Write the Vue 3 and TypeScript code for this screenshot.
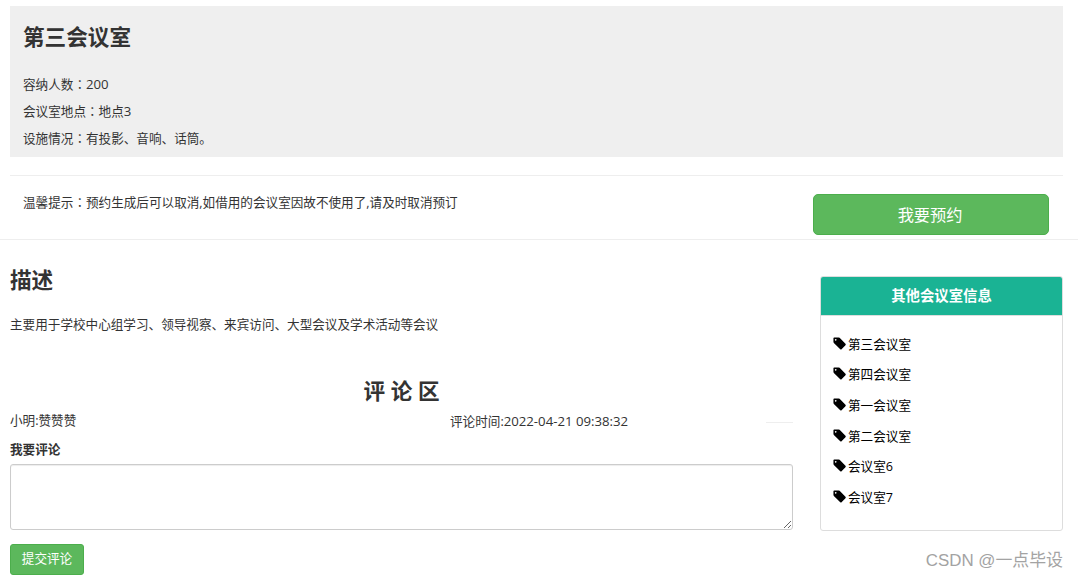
<script setup lang="ts">
const rooms: string[] = ['第三会议室', '第四会议室', '第一会议室', '第二会议室', '会议室6', '会议室7']
</script>

<template>
  <div class="page">
    <section class="hero">
      <h1>第三会议室</h1>
      <p>容纳人数<span class="colon">：</span><span class="num">200</span></p>
      <p>会议室地点<span class="colon">：</span>地点<span class="num">3</span></p>
      <p>设施情况<span class="colon">：</span>有投影、音响、话筒。</p>
    </section>
    <div class="notice-wrap">
      <div class="notice">
        <p>温馨提示<span class="colon">：</span>预约生成后可以取消,如借用的会议室因故不使用了,请及时取消预订</p>
        <button class="reserve" type="button">我要预约</button>
      </div>
    </div>
    <div class="main">
      <div class="left">
        <h2>描述</h2>
        <p class="desc">主要用于学校中心组学习、领导视察、来宾访问、大型会议及学术活动等会议</p>
        <h3>评 论 区</h3>
        <div class="comment">
          <span class="who">小明:赞赞赞</span>
          <span class="when">评论时间:<span class="num">2022-04-21 09:38:32</span></span>
          <i class="rule"></i>
        </div>
        <label class="lbl" for="cm">我要评论</label>
        <textarea id="cm" class="ta"></textarea>
        <button class="submit" type="button">提交评论</button>
      </div>
      <aside class="panel">
        <div class="panel-head">其他会议室信息</div>
        <ul>
          <li v-for="r in rooms" :key="r">
            <svg class="tag" viewBox="0 0 12 12" width="13" height="13" aria-hidden="true">
              <path fill-rule="evenodd" d="M0.4 1.2 Q0.4 0.4 1.2 0.4 L5.2 0.4 Q5.7 0.4 6.1 0.8 L11.5 6.3 Q12.1 6.9 11.5 7.5 L7.9 11.2 Q7.3 11.8 6.7 11.2 L1 5.7 Q0.4 5.2 0.4 4.7 Z M2.5 1.9 a0.7 0.7 0 1 0 0.01 0 Z" fill="#000"/>
            </svg>
            <span>{{ r }}</span>
          </li>
        </ul>
      </aside>
    </div>
    <div class="mark">CSDN @一点毕设</div>
  </div>
</template>

<style scoped>
.page {
  position: relative;
  width: 1078px;
  height: 578px;
  overflow: hidden;
  background: #fff;
  color: #333;
  font-family: "Open Sans", "Noto Sans CJK SC", sans-serif;
  font-size: 12.6px;
}
p { margin: 0; }
.colon { font-family: "Noto Sans CJK TC", sans-serif; }
.num { font-size: 13.2px; }
.hero {
  margin: 6px 15px 0 10px;
  height: 151px;
  box-sizing: border-box;
  padding: 16px 13px 0;
  background: #efefef;
}
h1 {
  margin: 0 0 23px;
  font-size: 21.6px;
  line-height: 30px;
  font-weight: 700;
}
.hero p { height: 18px; line-height: 18px; margin-bottom: 9px; }
.notice-wrap {
  margin-top: 18px;
  height: 64px;
  border-bottom: 1px solid #eee;
}
.notice {
  margin: 0 15px 0 10px;
  height: 64px;
  box-sizing: border-box;
  border-top: 1px solid #eee;
  display: flex;
  justify-content: space-between;
  padding: 0 14px 0 13px;
}
.notice p { margin-top: 17px; line-height: 18px; }
.reserve {
  width: 236px;
  height: 41px;
  margin-top: 18px;
  padding: 0 2px 2px 0;
  border: 1px solid #4cae4c;
  border-radius: 5px;
  background: #5cb85c;
  color: #fff;
  font: inherit;
  font-size: 16.2px;
}
.main {
  display: flex;
  padding: 0 15px 0 10px;
}
.left { width: 783px; }
h2 {
  margin: 24px 0 0;
  font-size: 21.6px;
  line-height: 32px;
  font-weight: 700;
}
.desc { margin-top: 20px; line-height: 18px; }
h3 {
  margin: 42px 0 0;
  text-align: center;
  font-size: 21.6px;
  line-height: 30px;
  font-weight: 700;
}
.comment {
  display: flex;
  align-items: center;
  height: 18px;
  margin-top: 6px;
  line-height: 18px;
}
.who { width: 440px; }
.when { flex: 1; }
.rule {
  width: 27px;
  height: 1px;
  margin-top: 2px;
  background: #eee;
}
.lbl {
  display: block;
  margin-top: 11px;
  line-height: 18px;
  font-weight: 700;
}
.ta {
  display: block;
  box-sizing: border-box;
  width: 783px;
  height: 66px;
  margin-top: 5px;
  border: 1px solid #ccc;
  border-radius: 3px;
  background: #fff;
  box-shadow: inset 0 1px 1px rgba(0,0,0,.075);
}
.submit {
  display: block;
  width: 74px;
  height: 31px;
  margin-top: 14px;
  padding: 0 0 5px;
  border: 1px solid #4cae4c;
  border-radius: 3px;
  background: #5cb85c;
  color: #fff;
  font: inherit;
}
.panel {
  width: 243px;
  height: 255px;
  box-sizing: border-box;
  margin: 36px 0 0 27px;
  border: 1px solid #ddd;
  border-radius: 3px;
  overflow: hidden;
}
.panel-head {
  height: 38px;
  line-height: 38px;
  background: #1ab394;
  border-bottom: 1px solid #ddd;
  color: #fff;
  text-align: center;
  font-size: 14.4px;
  font-weight: 700;
}
ul {
  list-style: none;
  margin: 0;
  padding: 12px 12px 0;
}
li {
  display: flex;
  align-items: center;
  gap: 2px;
  height: 30.6px;
  color: #000;
}
.tag { flex: none; }
.mark {
  position: absolute;
  right: 15px;
  bottom: 7px;
  color: #a3a3a3;
  font-size: 16.9px;
  line-height: 20px;
  font-family: "Liberation Sans", "Noto Sans CJK SC", sans-serif;
}
</style>
